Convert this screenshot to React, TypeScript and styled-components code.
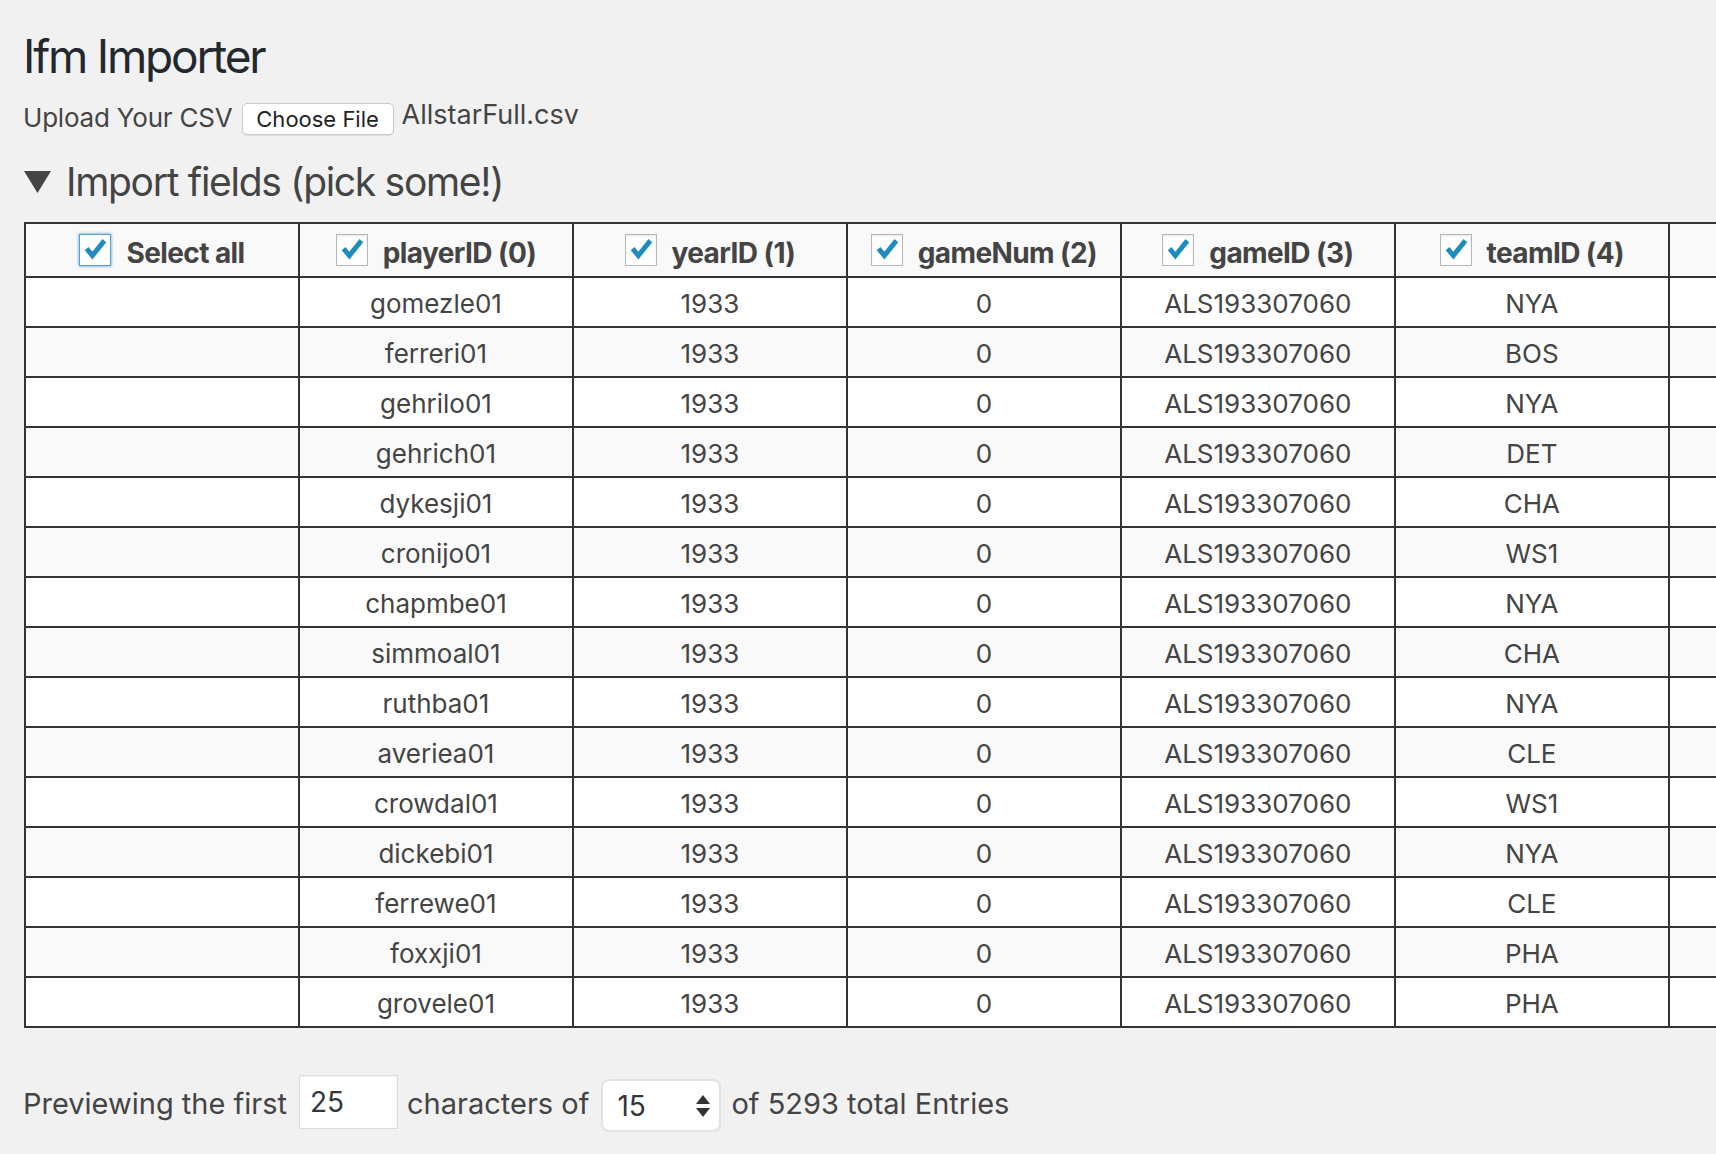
import React from "react";
import styled, { createGlobalStyle } from "styled-components";

const GlobalStyle = createGlobalStyle`
  html, body {
    margin: 0;
    padding: 0;
    background: #f1f1f1;
  }
  body {
    font-family: Inter, "Noto Sans", "Liberation Sans", sans-serif;
    color: #444;
  }
`;

const Page = styled.div`
  width: 100vw;
  height: 100vh;
  overflow: hidden;
  box-sizing: border-box;
  padding-left: 23px;
`;

const Title = styled.h1`
  margin: 28px 0 0;
  font-size: 46px;
  line-height: 56px;
  font-weight: 400;
  letter-spacing: -2.2px;
  color: #23282d;
`;

const UploadRow = styled.div`
  display: flex;
  align-items: flex-start;
  margin-top: 15px;
`;

const UploadLabel = styled.label`
  font-size: 26px;
  line-height: 36px;
  letter-spacing: -0.2px;
  margin-top: 1px;
  margin-right: 9px;
  color: #444;
`;

const FileButton = styled.button`
  width: 152px;
  height: 32px;
  margin-top: 4px;
  margin-right: 8px;
  padding: 0;
  box-sizing: border-box;
  border: 1px solid #c9c9c9;
  border-radius: 5px;
  background: #fff;
  box-shadow: 0 1px 1px rgba(0, 0, 0, 0.08);
  font-family: inherit;
  font-size: 22px;
  line-height: 30px;
  color: #222;
`;

const FileName = styled.span`
  font-size: 27px;
  line-height: 32px;
  color: #444;
`;

const Details = styled.details`
  margin-top: 22px;
`;

const Summary = styled.summary`
  display: flex;
  align-items: center;
  list-style: none;
  font-size: 39px;
  line-height: 48px;
  letter-spacing: -1.3px;
  color: #444;
  cursor: pointer;
  &::-webkit-details-marker {
    display: none;
  }
`;

const Triangle = styled.svg`
  width: 27px;
  height: 22px;
  margin-left: 1px;
  margin-right: 15px;
  flex: none;
`;

const Table = styled.table`
  margin: 16px 0 0 1px;
  border-collapse: collapse;
  table-layout: fixed;
  width: ${9 * 274.2}px;
`;

const HeadCell = styled.th`
  width: 272.2px;
  height: 54px;
  box-sizing: border-box;
  padding: 2px 0 0;
  background: #f9f9f9;
  border: 2px solid #333;
  font-size: 28px;
  font-weight: 700;
  letter-spacing: -0.6px;
  color: #444;
  text-align: center;
  vertical-align: middle;
`;

const HeadContent = styled.span`
  display: inline-flex;
  align-items: center;
  gap: 15px;
  line-height: 36px;
`;

const HeadText = styled.span`
  margin-top: 6px;
`;

const CheckBox = styled.span<{ $focused?: boolean }>`
  display: inline-flex;
  align-items: center;
  justify-content: center;
  width: 32px;
  height: 32px;
  box-sizing: border-box;
  background: #fff;
  border: 1px solid ${(p) => (p.$focused ? "#5b9dd9" : "#b4b9be")};
  box-shadow: ${(p) =>
    p.$focused
      ? "0 0 3px rgba(30, 140, 190, 0.8)"
      : "inset 0 1px 2px rgba(0, 0, 0, 0.1)"};
  flex: none;
`;

const Row = styled.tr<{ $alt: boolean }>`
  background: ${(p) => (p.$alt ? "#f9f9f9" : "#ffffff")};
`;

const Cell = styled.td`
  height: 50px;
  padding: 3px 0 0;
  box-sizing: border-box;
  border: 2px solid #333;
  font-size: 26px;
  line-height: 32px;
  color: #444;
  text-align: center;
  vertical-align: middle;
  white-space: nowrap;
  overflow: hidden;
`;

const PreviewRow = styled.div`
  display: flex;
  align-items: flex-start;
  margin-top: 47px;
`;

const PreviewText = styled.span<{ $gapLeft?: number }>`
  font-size: 29px;
  line-height: 36px;
  margin-top: 11px;
  margin-left: ${(p) => p.$gapLeft ?? 0}px;
  color: #444;
  white-space: nowrap;
`;

const CharInput = styled.input`
  width: 99px;
  height: 54px;
  margin: 0 0 0 12px;
  padding: 0 0 0 10px;
  box-sizing: border-box;
  border: 1px solid #ddd;
  border-radius: 0;
  background: #fff;
  box-shadow: inset 0 1px 2px rgba(0, 0, 0, 0.07);
  font-family: inherit;
  font-size: 28px;
  color: #32373c;
  outline: none;
`;

const NumberBox = styled.div`
  display: flex;
  align-items: center;
  justify-content: space-between;
  width: 120px;
  height: 53px;
  margin: 4px 0 0 12px;
  padding: 0 9px 0 14px;
  box-sizing: border-box;
  border: 2px solid #e2e2e2;
  border-radius: 8px;
  background: #fff;
  font-size: 28px;
  color: #32373c;
`;

const Spinner = styled.svg`
  width: 14px;
  height: 22px;
  flex: none;
`;

const fields = ["playerID", "yearID", "gameNum", "gameID", "teamID", "lgID", "GP", "startingPos"];

const rows: string[][] = [
  ["gomezle01", "1933", "0", "ALS193307060", "NYA", "AL", "1", "1"],
  ["ferreri01", "1933", "0", "ALS193307060", "BOS", "AL", "1", "2"],
  ["gehrilo01", "1933", "0", "ALS193307060", "NYA", "AL", "1", "3"],
  ["gehrich01", "1933", "0", "ALS193307060", "DET", "AL", "1", "4"],
  ["dykesji01", "1933", "0", "ALS193307060", "CHA", "AL", "1", "5"],
  ["cronijo01", "1933", "0", "ALS193307060", "WS1", "AL", "1", "6"],
  ["chapmbe01", "1933", "0", "ALS193307060", "NYA", "AL", "1", "7"],
  ["simmoal01", "1933", "0", "ALS193307060", "CHA", "AL", "1", "8"],
  ["ruthba01", "1933", "0", "ALS193307060", "NYA", "AL", "1", "9"],
  ["averiea01", "1933", "0", "ALS193307060", "CLE", "AL", "1", ""],
  ["crowdal01", "1933", "0", "ALS193307060", "WS1", "AL", "1", ""],
  ["dickebi01", "1933", "0", "ALS193307060", "NYA", "AL", "0", ""],
  ["ferrewe01", "1933", "0", "ALS193307060", "CLE", "AL", "0", ""],
  ["foxxji01", "1933", "0", "ALS193307060", "PHA", "AL", "1", ""],
  ["grovele01", "1933", "0", "ALS193307060", "PHA", "AL", "1", ""],
];

const Check = () => (
  <svg width="32" height="32" viewBox="0 0 32 32" style={{ display: "block" }}>
    <polyline
      points="7,14.5 13.2,22 26,6"
      fill="none"
      stroke="#1e8cbe"
      strokeWidth="5.2"
      strokeLinejoin="miter"
      strokeLinecap="butt"
    />
  </svg>
);

const HeaderCheck = ({ label, focused }: { label: string; focused?: boolean }) => (
  <HeadCell>
    <HeadContent>
      <CheckBox $focused={focused}>
        <Check />
      </CheckBox>
      <HeadText>{label}</HeadText>
    </HeadContent>
  </HeadCell>
);

export default function App() {
  return (
    <>
      <GlobalStyle />
      <Page>
        <Title>Ifm Importer</Title>
        <UploadRow>
          <UploadLabel>Upload Your CSV</UploadLabel>
          <FileButton type="button">Choose File</FileButton>
          <FileName>AllstarFull.csv</FileName>
        </UploadRow>
        <Details open>
          <Summary>
            <Triangle viewBox="0 0 27 22">
              <polygon points="0,0 27,0 13.5,22" fill="#444" />
            </Triangle>
            Import fields (pick some!)
          </Summary>
          <Table>
            <thead>
              <tr>
                <HeaderCheck label="Select all" focused />
                {fields.map((f, i) => (
                  <HeaderCheck key={f} label={`${f} (${i})`} />
                ))}
              </tr>
            </thead>
            <tbody>
              {rows.map((r, ri) => (
                <Row key={ri} $alt={ri % 2 === 1}>
                  <Cell />
                  {r.map((v, ci) => (
                    <Cell key={ci}>{v}</Cell>
                  ))}
                </Row>
              ))}
            </tbody>
          </Table>
        </Details>
        <PreviewRow>
          <PreviewText>Previewing the first</PreviewText>
          <CharInput type="text" defaultValue="25" />
          <PreviewText $gapLeft={9}>characters of</PreviewText>
          <NumberBox>
            <span>15</span>
            <Spinner viewBox="0 0 14 22">
              <polygon points="7,0 14,9 0,9" fill="#333" />
              <polygon points="0,13 14,13 7,22" fill="#333" />
            </Spinner>
          </NumberBox>
          <PreviewText $gapLeft={10}>of 5293 total Entries</PreviewText>
        </PreviewRow>
      </Page>
    </>
  );
}
